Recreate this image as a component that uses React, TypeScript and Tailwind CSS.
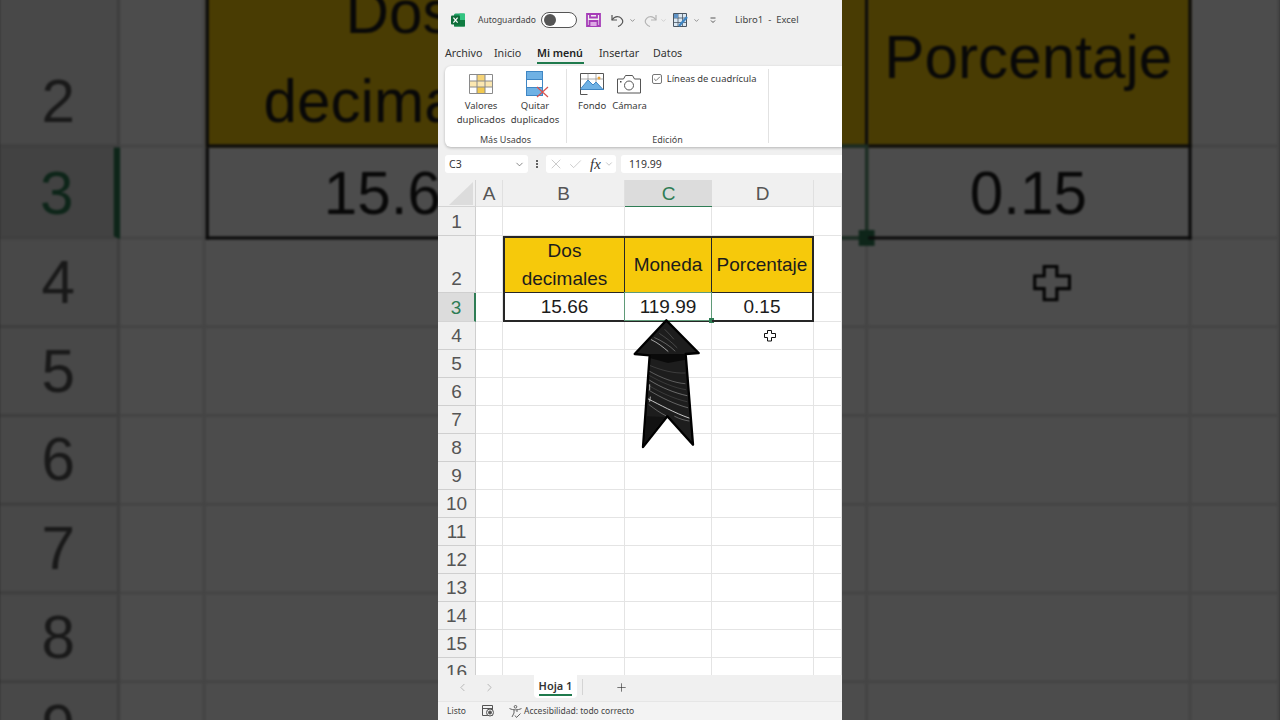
import { Check, ChevronDown, ChevronLeft, ChevronRight, Plus, X } from "lucide-react";

const COLS = ["A", "B", "C", "D", "E"];
const ROWS = [1, 2, 3, 4, 5, 6, 7, 8, 9, 10, 11, 12, 13, 14, 15, 16, 17];

const TABLE: Record<number, Record<string, string>> = {
  2: { B: "Dos decimales", C: "Moneda", D: "Porcentaje" },
  3: { B: "15.66", C: "119.99", D: "0.15" },
};

const ExcelLogo = () => (
  <svg width="14" height="14" viewBox="0 0 14 14">
    <rect x="3" y="0.5" width="11" height="13" rx="1.5" fill="#21a366" />
    <rect x="8.5" y="0.5" width="5.5" height="6.5" fill="#33c481" />
    <rect x="3" y="7" width="11" height="6.5" fill="#107c41" />
    <rect x="0" y="2.5" width="9" height="9" rx="1" fill="#0e6b38" />
    <path d="M2.4 4.6 6.6 9.6M6.6 4.6 2.4 9.6" stroke="#fff" strokeWidth="1.2" />
  </svg>
);

const SaveIcon = () => (
  <svg width="15" height="14" viewBox="0 0 15 14" fill="none" stroke="#a63db8" strokeWidth="1.8">
    <path d="M1 1h13v12H1z" />
    <path d="M4 1v3.500h7V1" />
    <path d="M3.500 13V8h8v5" fill="#dca8e4" />
  </svg>
);

const UndoIcon = ({ color, flip }: { color: string; flip?: boolean }) => (
  <svg
    width="13"
    height="13"
    viewBox="0 0 13 13"
    fill="none"
    stroke={color}
    strokeWidth="1.2"
    className={flip ? "-scale-x-100" : ""}
  >
    <path d="M1 1v5h5" />
    <path d="M1 6c2-3 5-4 7.500-3 3 1.500 4 4.500 2.500 6.500-1 1.500-2.500 2.500-4 3" />
  </svg>
);

const TablePenIcon = () => (
  <svg width="15" height="14" viewBox="0 0 15 14" fill="none">
    <path d="M.5.5h13v13H.5z" fill="#dbe8f3" stroke="#4a5663" />
    <path d="M.5 5h13M.5 9.500h13M5 .5v13M9.500.5v13" stroke="#4a5663" strokeWidth=".8" />
    <path d="M1 1h4v4H1z" fill="#5f93c6" />
    <path d="M6 13 14 4" stroke="#3f86c4" strokeWidth="2.400" />
  </svg>
);

const QatMoreIcon = () => (
  <svg width="6" height="7" viewBox="0 0 6 7" fill="none" stroke="#444" strokeWidth=".9">
    <path d="M.5 1h5" />
    <path d="M1 3.500 3 5.500 5 3.500" />
  </svg>
);

const ValoresIcon = () => (
  <svg width="24" height="20" viewBox="0 0 24 20" fill="none">
    <path d="M8 1h8v18H8z" fill="#f6d477" />
    <path d="M1 7h22v6H1z" fill="#fbe7b0" />
    <path d="M8 13h8v6H8z" fill="#f2c94f" />
    <path
      d="M.5.500h23v19H.5zM.5 7h23M.5 13h23M8 .5v19M16 .5v19"
      stroke="#8a8a8a"
      strokeWidth="1"
    />
  </svg>
);

const QuitarIcon = () => (
  <svg width="24" height="27" viewBox="0 0 24 27" fill="none" className="ml-[6px]">
    <rect x="0.5" y="0.5" width="16" height="8" fill="#6fb1e4" stroke="#3f86c4" />
    <rect x="0.5" y="8.500" width="16" height="8" fill="#fff" stroke="#3f86c4" />
    <rect x="0.5" y="16.500" width="16" height="8" fill="#6fb1e4" stroke="#3f86c4" />
    <path d="M11 16 22 26M22 16 11 26" stroke="#d9534f" strokeWidth="1.200" />
  </svg>
);

const FondoIcon = () => (
  <svg width="24" height="22" viewBox="0 0 24 22" fill="none">
    <path d="M.5.500h23v16H.5z" fill="#fff" stroke="#555" />
    <path d="M.5 6h23M8 .5v16M16 .5v16" stroke="#888" strokeWidth=".7" />
    <path d="M.5 16 8 7l5 5 3-3 7.500 8v-.5H.5z" fill="#6fb1e4" stroke="#3f86c4" />
    <circle cx="19" cy="5" r="1.500" fill="#e8a33d" />
    <path d="M.5 16v5.500h7" stroke="#555" />
  </svg>
);

const CamaraIcon = () => (
  <svg width="24" height="19" viewBox="0 0 24 19" fill="none" stroke="#555" strokeWidth="1">
    <path d="M.5 4h6l2-3.500h7l2 3.500h6v14H.5z" />
    <circle cx="12" cy="10.500" r="4.500" />
    <rect x="3" y="6" width="1.500" height="1.500" fill="#444" stroke="none" />
  </svg>
);

const MacroIcon = () => (
  <svg width="13" height="12" viewBox="0 0 13 12" fill="none" stroke="#555" strokeWidth="1">
    <path d="M.5.500h10v10H.5zM.5 3.500h10" />
    <circle cx="8" cy="7.500" r="3.500" fill="#eee" />
    <circle cx="8" cy="7.500" r="1.500" fill="#555" />
  </svg>
);

const AccessIcon = () => (
  <svg width="13" height="13" viewBox="0 0 13 13" fill="none" stroke="#555" strokeWidth=".9">
    <circle cx="6.500" cy="1.800" r="1.300" />
    <path d="M.5 3.500c2 1 4 1.300 6 1.300s4-.3 6-1.300M5 5v3L3 12M8 5v2" />
    <path d="M6 10.500l1.500 2 4-4" />
  </svg>
);

const CrossCursor = () => (
  <svg width="12" height="12" viewBox="0 0 12 12" fill="#fff" stroke="#111" strokeWidth="1">
    <path d="M3.500.5h4v3h4v4h-4v3.500h-4v-3.500H.5v-4h3z" />
  </svg>
);

// hand drawn chalk arrow, viewBox in the same numbers as the zoomed crop
const ChalkArrow = () => (
  <svg width="68" height="131" viewBox="100 25 204 393" fill="none">
    <path
      d="M200 32 105 133 150 137 130 412 203 320 280 405 258 133 297 130Z"
      fill="#1d1d1d"
      stroke="#000"
      strokeWidth="7"
      strokeLinejoin="round"
    />
    <path d="M152 133 256 133 258 150 205 160 150 145Z" fill="#060606" opacity=".8" />
    <path d="M140 320 196 322 135 400Z" fill="#121212" />
    <g stroke="#f0f0f0" fill="none" strokeLinecap="round">
      <path d="M155 90 C175 100 190 112 205 125" strokeWidth="3" opacity=".65" />
      <path d="M165 84 C188 94 210 108 226 124" strokeWidth="2" opacity=".5" />
      <path d="M180 72 C198 84 215 96 232 114" strokeWidth="1.500" opacity=".4" />
      <path d="M196 60 C205 70 215 78 222 88" strokeWidth="1.500" opacity=".4" />
      <path d="M152 168 C185 182 225 192 256 190" strokeWidth="1.500" opacity=".3" />
      <path d="M150 185 C185 205 225 220 256 222" strokeWidth="2" opacity=".45" />
      <path d="M150 198 C185 218 225 235 258 240" strokeWidth="1.200" opacity=".35" />
      <path d="M150 212 C185 234 225 250 262 258" strokeWidth="2" opacity=".55" />
      <path d="M148 228 C185 250 225 268 262 276" strokeWidth="1.200" opacity=".35" />
      <path d="M148 242 C185 264 225 284 264 294" strokeWidth="2" opacity=".5" />
      <path d="M146 268 C180 285 225 310 268 325" strokeWidth="3" opacity=".8" />
      <path d="M148 285 C165 298 182 310 198 318" strokeWidth="2" opacity=".5" />
      <path d="M225 320 C240 328 255 332 268 334" strokeWidth="2" opacity=".5" />
      <path d="M150 225 L150 240M152 262 L150 275" strokeWidth="3" opacity=".7" />
    </g>
  </svg>
);

const Sheet = ({ main }: { main?: boolean }) => (
  <div className="relative h-[495px] w-[404px] overflow-hidden bg-white font-['Liberation_Sans',sans-serif] text-[19px] text-[#1c1c1c]">
    <div className="grid grid-cols-[38px_27px_122px_87px_102px_28px] grid-rows-[27px_29px_57px_29px_repeat(13,28px)]">
      <div className="flex items-center justify-end border-r border-b border-[#d4d4d4] bg-[#f0f0f0] pr-[2px]">
        <svg width="24" height="23" viewBox="0 0 24 23">
          <path d="M24 0v23H0z" fill="#dcdcdc" />
        </svg>
      </div>
      {COLS.map((col) => (
        <div
          key={col}
          className={
            col === "C"
              ? "flex items-center justify-center border-b-[1.5px] border-[#2f7d55] bg-[#dcdcdc] pt-[2px] text-[#2f7d55]"
              : "flex items-center justify-center border-r border-b border-[#e0e0e0] bg-[#f0f0f0] pt-[2px] text-[#555]"
          }
        >
          {col === "E" ? "" : col}
        </div>
      ))}

      {ROWS.map((row) => (
        <div key={row} className="contents">
          <div
            className={
              row === 3
                ? "flex items-center justify-center border-r-2 border-b border-r-[#2f7d55] border-b-[#d4d4d4] bg-[#dcdcdc] pt-[2px] text-[#2f7d55]"
                : "flex items-end justify-center border-r border-b border-[#cfcfcf] bg-[#f0f0f0] leading-[27px] text-[#555]"
            }
          >
            {row}
          </div>
          {COLS.map((col) => {
            const value = TABLE[row]?.[col];
            if (value === undefined) {
              return <div key={col} className="border-r border-b border-[#e4e4e4]" />;
            }
            return (
              <div
                key={col}
                className={[
                  "relative flex items-center justify-center border-r border-b border-[#262626] text-center leading-[28px]",
                  row === 2 ? "border-t bg-[#f6c90b] px-1" : "pt-[1px]",
                  col === "B" ? "border-l" : "",
                  main && row === 2 ? "border-t-2" : "",
                  main && row === 3 ? "border-b-2" : "",
                  main && col === "B" ? "border-l-2" : "",
                  main && col === "D" ? "border-r-2" : "",
                ].join(" ")}
              >
                {value}
                {row === 3 && col === "C" && (
                  <>
                    <div className="absolute -inset-px border-[1.5px] border-[#5f9a78]" />
                    <div className="absolute -right-[3px] -bottom-[3px] size-[5px] bg-[#2f7d55]" />
                  </>
                )}
              </div>
            );
          })}
        </div>
      ))}
    </div>
    <div className="absolute top-[150px] left-[326px]">
      <CrossCursor />
    </div>
    {main && (
      <div className="absolute top-[138px] left-[195px]">
        <ChalkArrow />
      </div>
    )}
  </div>
);

const RibbonButton = ({ icon, lines }: { icon: React.ReactNode; lines: string[] }) => (
  <div className="flex flex-col items-center">
    <div className="flex h-[30px] items-center justify-center">{icon}</div>
    {lines.map((line) => (
      <span key={line} className="text-[9.500px] leading-[13.500px] whitespace-nowrap text-[#3a3a3a]">
        {line}
      </span>
    ))}
  </div>
);

const Chrome = () => (
  <>
    {/* title bar */}
    <div className="flex h-[40px] items-center pl-[13px] text-[#444]">
      <ExcelLogo />
      <span className="ml-[13px] w-[58px] pt-[1px] text-[8.500px] whitespace-nowrap">Autoguardado</span>
      <div className="ml-[5px] flex h-[16px] w-[36px] items-center rounded-full border border-[#555] bg-white pl-[2px]">
        <div className="size-[12px] rounded-full bg-[#555]" />
      </div>
      <div className="ml-[9px]">
        <SaveIcon />
      </div>
      <div className="ml-[10px]">
        <UndoIcon color="#555" />
      </div>
      <ChevronDown size={7} strokeWidth={2} className="ml-[5px] text-[#555]" />
      <div className="ml-[8px]">
        <UndoIcon color="#b5b5b5" flip />
      </div>
      <ChevronDown size={7} strokeWidth={2} className="ml-[3px] text-[#bbb]" />
      <div className="ml-[6px]">
        <TablePenIcon />
      </div>
      <ChevronDown size={7} strokeWidth={2} className="ml-[5px] text-[#555]" />
      <div className="ml-[10px]">
        <QatMoreIcon />
      </div>
      <span className="ml-[19px] text-[9.500px] whitespace-nowrap">Libro1&nbsp; - &nbsp;Excel</span>
    </div>

    {/* tabs */}
    <div className="flex h-[26px] items-start pt-[6px] pl-[7px] text-[10.700px] leading-[15px] text-[#333]">
      <span className="w-[49px]">Archivo</span>
      <span className="w-[43px]">Inicio</span>
      <span className="relative w-[62px] font-semibold text-[#222]">
        Mi menú
        <span className="absolute top-[16px] left-0 h-[2px] w-[47px] bg-[#1f7a4d]" />
      </span>
      <span className="w-[54px]">Insertar</span>
      <span>Datos</span>
    </div>

    {/* ribbon */}
    <div className="ml-[7px] flex h-[81px] rounded-l-[6px] bg-white pt-[3px] pb-[4px] shadow-[0_1px_3px_rgba(0,0,0,0.25)]">
      <div className="flex w-[122px] flex-col border-r border-[#e2e2e2]">
        <div className="flex flex-1 pl-[9px]">
          <div className="w-[54px]">
            <RibbonButton icon={<ValoresIcon />} lines={["Valores", "duplicados"]} />
          </div>
          <div className="w-[54px]">
            <RibbonButton icon={<QuitarIcon />} lines={["Quitar", "duplicados"]} />
          </div>
        </div>
        <span className="-mb-[3px] text-center text-[9px] leading-[12px] text-[#444]">Más Usados</span>
      </div>
      <div className="flex w-[202px] flex-col border-r border-[#e2e2e2]">
        <div className="flex flex-1 items-start pl-[11px]">
          <RibbonButton icon={<FondoIcon />} lines={["Fondo"]} />
          <div className="ml-[6px]">
            <RibbonButton icon={<CamaraIcon />} lines={["Cámara"]} />
          </div>
          <div className="mt-[2px] ml-[5px] flex items-center gap-[5px]">
            <div className="flex size-[10px] items-center justify-center rounded-[2px] border border-[#777]">
              <Check size={8} strokeWidth={2} className="text-[#333]" />
            </div>
            <span className="pt-[1px] text-[9.400px] leading-[14px] whitespace-nowrap text-[#3a3a3a]">
              Líneas de cuadrícula
            </span>
          </div>
        </div>
        <span className="-mb-[3px] text-center text-[9px] leading-[12px] text-[#444]">Edición</span>
      </div>
    </div>

    {/* formula bar */}
    <div className="mt-[8px] flex h-[18px] items-center pl-[7px] text-[10.500px] text-[#333]">
      <div className="flex h-full w-[83px] items-center justify-between rounded-[3px] bg-white pr-[3px] pl-[4px]">
        <span className="pt-[1px]">C3</span>
        <ChevronDown size={11} strokeWidth={1.5} className="text-[#555]" />
      </div>
      <div className="flex w-[18px] flex-col items-center gap-[1px]">
        <span className="size-[2px] rounded-full bg-[#333]" />
        <span className="size-[2px] rounded-full bg-[#333]" />
        <span className="size-[2px] rounded-full bg-[#333]" />
      </div>
      <div className="flex h-full w-[70px] items-center rounded-[3px] bg-white pl-[2px]">
        <X size={16} strokeWidth={1} className="text-[#b0b0b0]" />
        <Check size={15} strokeWidth={1} className="ml-[4px] text-[#b0b0b0]" />
        <span className="ml-[7px] font-['Liberation_Serif',serif] text-[15px] leading-none text-[#333] italic">
          fx
        </span>
        <ChevronDown size={10} strokeWidth={1} className="ml-[3px] text-[#777]" />
      </div>
      <div className="ml-[5px] flex h-full flex-1 items-center rounded-l-[3px] bg-white pt-[1px] pl-[8px]">
        119.99
      </div>
    </div>

    <div className="h-[7px]" />
  </>
);

const SheetTabs = () => (
  <>
    <div className="flex h-[26px] items-start bg-[#f0f0f0] text-[#333]">
      <ChevronLeft size={13} strokeWidth={1.2} className="mt-[6px] ml-[18px] text-[#999]" />
      <ChevronRight size={13} strokeWidth={1.2} className="mt-[6px] ml-[14px] text-[#999]" />
      <div className="ml-[38px] flex h-[23px] w-[43px] flex-col items-center rounded-b-[4px] bg-white pt-[4px]">
        <span className="text-[11px] leading-[14px] font-semibold whitespace-nowrap">Hoja 1</span>
        <span className="mt-[1px] h-[1.5px] w-[33px] bg-[#1f7a4d]" />
      </div>
      <div className="mt-[4px] ml-[5px] h-[16px] w-px bg-[#d4d4d4]" />
      <Plus size={13} strokeWidth={1.2} className="mt-[6px] ml-[32px] text-[#333]" />
    </div>
    <div className="flex h-[19px] items-center border-t border-[#e6e6e6] bg-[#f3f3f3] pl-[9px] text-[8.500px] text-[#444]">
      <span className="w-[35px]">Listo</span>
      <MacroIcon />
      <div className="ml-[14px]">
        <AccessIcon />
      </div>
      <span className="ml-[2px] whitespace-nowrap">Accesibilidad: todo correcto</span>
    </div>
  </>
);

export default function App() {
  return (
    <div className="relative h-screen w-full overflow-hidden bg-[#4d4d4d] font-['Noto_Sans',sans-serif]">
      {/* video side fill: same sheet enlarged and dimmed */}
      <div className="absolute inset-0 flex justify-center overflow-hidden">
        <div className="h-[720px] w-[404px] scale-[3.17] bg-white pt-[180px] blur-[0.3px]">
          <Sheet />
        </div>
      </div>
      <div className="absolute inset-0 bg-black/70" />

      <div className="relative mx-auto flex h-[720px] w-[404px] flex-col overflow-hidden bg-[#f0f0f0]">
        <Chrome />
        <Sheet main />
        <SheetTabs />
      </div>
    </div>
  );
}
